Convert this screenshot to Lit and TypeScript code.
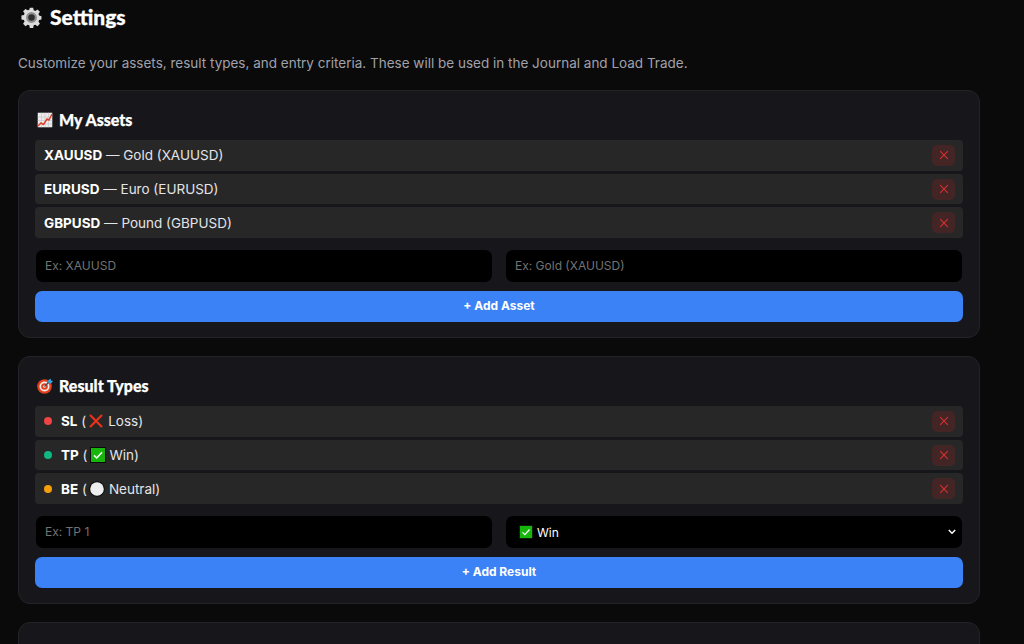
import { LitElement, html, css } from "lit";
import { customElement } from "lit/decorators.js";

const gear = html`<svg class="emo gear" viewBox="0 0 20 20"><g fill="#dcdcdc"><path d="M8.4 .6h3.2l.5 2.5 1.5.6 2.1-1.4 2.3 2.3-1.4 2.1.6 1.5 2.3.5v3.2l-2.3.5-.6 1.5 1.4 2.1-2.3 2.3-2.1-1.4-1.5.6-.5 2.5H8.4l-.5-2.5-1.5-.6-2.1 1.4L2 15.9l1.4-2.1-.6-1.5L.4 11.8V8.2l2.4-.5.6-1.5L2 4.1l2.3-2.3 2.1 1.4 1.5-.6z"/></g><circle cx="10" cy="10" r="5.2" fill="#8f8f8f"/><circle cx="10" cy="10" r="3.1" fill="#2e2e2e"/></svg>`;
const chart = html`<svg class="emo" viewBox="0 0 16 16"><rect width="16" height="16" fill="#111"/><rect x=".7" y=".7" width="14.6" height="14.6" fill="#ececec"/><path d="M.7 5h14.6M.7 8.5h14.6M.7 12h14.6M4.5.7v14.6M8 .7v14.6M11.5.7v14.6" stroke="#c4c4c4" stroke-width=".6"/><path d="M1 14l3-3 2.5 1.5L10 7l2 1 3-6" fill="none" stroke="#e0402e" stroke-width="1.5"/></svg>`;
const target = html`<svg class="emo" viewBox="0 0 16 16"><circle cx="7.5" cy="8.5" r="7.3" fill="#e2401f"/><circle cx="7.5" cy="8.5" r="5" fill="#f5ece6"/><circle cx="7.5" cy="8.5" r="3.3" fill="#e2401f"/><circle cx="7.5" cy="8.5" r="1.3" fill="#f5ece6"/><path d="M7.5 8.5L13 3" stroke="#3a4a5a" stroke-width="1.2"/><path d="M11 2.5l2.5-2 .5 2 2 .5-2 2.5-2.5-.5z" fill="#2fa6e8"/></svg>`;
const cross = html`<svg class="emo-s" viewBox="0 0 16 16"><path d="M2 2l12 12M14 2L2 14" stroke="#e8321a" stroke-width="2.2" fill="none"/></svg>`;
const check = html`<svg class="emo-s" viewBox="0 0 16 16"><rect width="16" height="16" fill="#0c0c0c"/><rect x="1" y="1" width="14" height="14" fill="#17b60c"/><path d="M4 8.4l2.7 2.6L12 5.2" fill="none" stroke="#fff" stroke-width="1.5"/></svg>`;
const white = html`<svg class="emo-s" viewBox="0 0 16 16"><circle cx="8" cy="8" r="7.8" fill="#0c0c0c"/><circle cx="8" cy="8" r="6.8" fill="#eeeeee"/></svg>`;
const x = html`<svg class="x" viewBox="0 0 10 10"><path d="M1.2 1.2l7.6 7.6M8.8 1.2L1.2 8.8" stroke="#dc2f2f" stroke-width="1.1" fill="none"/></svg>`;

@customElement("app-root")
export class AppRoot extends LitElement {
  static styles = css`
    :host { display: block; height: 644px; overflow: hidden; background: #0a0a0a; color: #fff; font-family: Inter, "Liberation Sans", sans-serif; }
    .page { padding: 0 18px; width: 962px; box-sizing: content-box; }
    .title { display: flex; align-items: center; height: 34px; gap: 8px; padding-left: 3px; font-family: Lato, sans-serif; font-weight: 900; font-size: 21px; color: #fff; margin: 0; -webkit-text-stroke: 0.3px #fff; }
    .title span { position: relative; top: -1px; }
    .gear { width: 21px; height: 21px; }
    .desc { margin: 20px 0 0; height: 18px; line-height: 18px; font-size: 13.5px; color: #a1a1aa; }
    .card { margin-top: 18px; background: #17171b; border: 1px solid #242428; border-radius: 12px; padding: 17.6px 16px 16px; box-sizing: border-box; height: 248px; }
    .card.first { margin-top: 18.4px; }
    .card.third { height: 120px; }
    h3 { display: flex; align-items: center; gap: 6px; height: 22px; margin: 0 0 9px 2px; font-family: Lato, sans-serif; font-weight: 900; font-size: 16px; color: #fff; -webkit-text-stroke: 0.25px #fff; }
    .emo { width: 16px; height: 16px; flex: none; }
    .gear.emo { width: 21px; height: 21px; }
    .rows { display: flex; flex-direction: column; gap: 3px; }
    .row { display: flex; align-items: center; justify-content: space-between; height: 30.7px; box-sizing: border-box; padding: 0 8px 0 9px; background: #272727; border-radius: 4px; font-size: 13.5px; color: #e4e4e7; }
    .row b { font-weight: 700; color: #fff; }
    .left { display: flex; align-items: center; white-space: pre; }
    .dot { width: 8px; height: 8px; border-radius: 50%; margin-right: 9px; }
    .emo-s { width: 16px; height: 16px; margin: 0 4px 0 2px; flex: none; }
    .del { display: flex; align-items: center; justify-content: center; width: 23px; height: 21px; background: #432526; border-radius: 5px; }
    .x { width: 10px; height: 10px; }
    .form { display: grid; grid-template-columns: 1fr 1fr; gap: 14px; margin: 12px 1px 0; }
    .field { display: flex; align-items: center; justify-content: space-between; height: 32px; box-sizing: border-box; padding: 0 9px 1px; background: #000; border-radius: 7px; font-size: 12px; color: #737373; }
    .sel { color: #fff; padding: 0 6px 0 13px; }
    .sel span { display: flex; align-items: center; }
    .sel .emo-s { width: 14px; height: 14px; margin: 0 4px 0 0; }
    .chev { width: 8px; height: 6px; }
    .btn { display: flex; align-items: center; justify-content: center; height: 31px; margin-top: 8.5px; padding-bottom: 1px; box-sizing: border-box; background: #3b82f6; border-radius: 7px; font-size: 12px; font-weight: 700; color: #fff; }
  `;

  row(left: unknown) {
    return html`<div class="row"><span class="left">${left}</span><span class="del">${x}</span></div>`;
  }

  render() {
    return html`<div class="page">
      <h2 class="title">${gear}<span>Settings</span></h2>
      <p class="desc">Customize your assets, result types, and entry criteria. These will be used in the Journal and Load Trade.</p>
      <section class="card first">
        <h3>${chart}<span>My Assets</span></h3>
        <div class="rows">
          ${this.row(html`<b>XAUUSD</b> — Gold (XAUUSD)`)}
          ${this.row(html`<b>EURUSD</b> — Euro (EURUSD)`)}
          ${this.row(html`<b>GBPUSD</b> — Pound (GBPUSD)`)}
        </div>
        <div class="form">
          <div class="field">Ex: XAUUSD</div>
          <div class="field">Ex: Gold (XAUUSD)</div>
        </div>
        <div class="btn">+ Add Asset</div>
      </section>
      <section class="card second">
        <h3>${target}<span>Result Types</span></h3>
        <div class="rows">
          ${this.row(html`<i class="dot" style="background:#ef4444"></i><b>SL</b> (${cross}Loss)`)}
          ${this.row(html`<i class="dot" style="background:#10b981"></i><b>TP</b> (${check}Win)`)}
          ${this.row(html`<i class="dot" style="background:#f59e0b"></i><b>BE</b> (${white}Neutral)`)}
        </div>
        <div class="form">
          <div class="field">Ex: TP 1</div>
          <div class="field sel"><span>${check}Win</span><svg class="chev" viewBox="0 0 8 6"><path d="M.8 1l3.2 3.2L7.2 1" fill="none" stroke="#fff" stroke-width="1.5"/></svg></div>
        </div>
        <div class="btn">+ Add Result</div>
      </section>
      <section class="card third"></section>
    </div>`;
  }
}
